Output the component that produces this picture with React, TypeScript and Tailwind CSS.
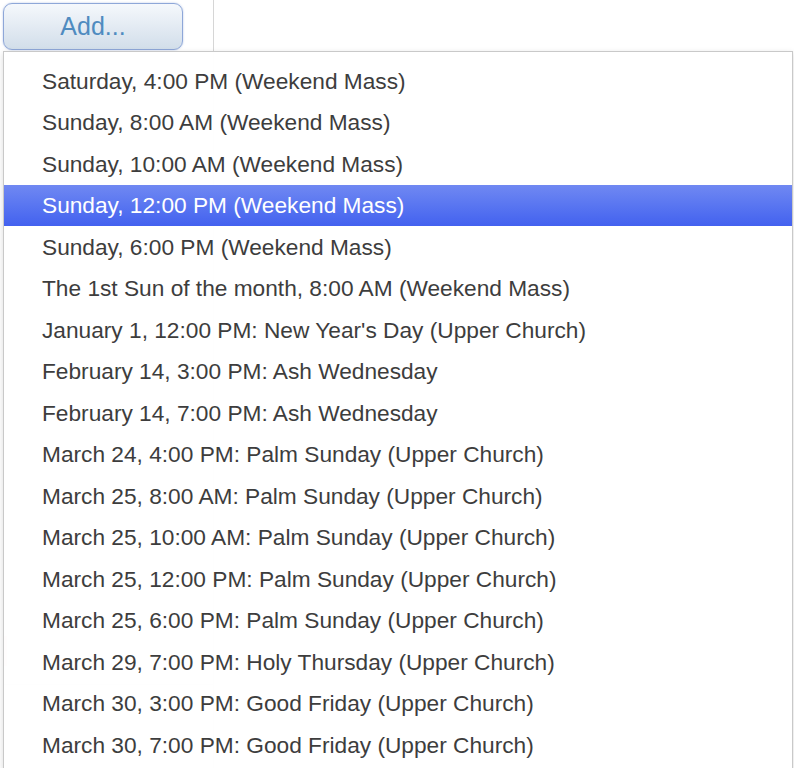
import React from 'react';

const services: string[] = [
  'Saturday, 4:00 PM (Weekend Mass)',
  'Sunday, 8:00 AM (Weekend Mass)',
  'Sunday, 10:00 AM (Weekend Mass)',
  'Sunday, 12:00 PM (Weekend Mass)',
  'Sunday, 6:00 PM (Weekend Mass)',
  'The 1st Sun of the month, 8:00 AM (Weekend Mass)',
  "January 1, 12:00 PM: New Year's Day (Upper Church)",
  'February 14, 3:00 PM: Ash Wednesday',
  'February 14, 7:00 PM: Ash Wednesday',
  'March 24, 4:00 PM: Palm Sunday (Upper Church)',
  'March 25, 8:00 AM: Palm Sunday (Upper Church)',
  'March 25, 10:00 AM: Palm Sunday (Upper Church)',
  'March 25, 12:00 PM: Palm Sunday (Upper Church)',
  'March 25, 6:00 PM: Palm Sunday (Upper Church)',
  'March 29, 7:00 PM: Holy Thursday (Upper Church)',
  'March 30, 3:00 PM: Good Friday (Upper Church)',
  'March 30, 7:00 PM: Good Friday (Upper Church)',
];

const App: React.FC = () => {
  const selected = 3;

  return (
    <div className="relative w-[794px] h-[768px] overflow-hidden bg-white" style={{ fontFamily: '"Liberation Sans", Arial, sans-serif' }}>
      {/* sidebar column behind the menu */}
      <div className="w-[214px] h-full border-r border-[#d6d6d6] flex flex-col pt-[3px] pl-[3px]">
        <button className="w-[180px] h-[47px] rounded-[9px] border border-[#8ea7d8] bg-gradient-to-b from-[#f5f8fc] to-[#d2deea] text-[25px] text-[#4f8bc0] shadow-[0_0_2px_rgba(120,150,210,0.6)]">
          Add...
        </button>
        <div className="mt-[6px] w-[180px] h-[48px] rounded-[8px] border border-[#e6ebf2]" />
        <div className="mt-[262px] w-[180px] h-[46px] rounded-[8px] border border-[#e6ebf2] bg-[#f7f9fc]" />
        <div className="mt-[224px] w-[4px] h-[30px] bg-[#eec0c0]" />
        <div className="mt-[18px] w-[210px] h-[80px] border-t border-[#e2e2e2] bg-[#f1f5fa]" />
      </div>

      {/* dropdown list */}
      <div className="absolute left-[3px] top-[51px] right-[1px] bottom-[-2px] border border-[#c9c9c9] bg-white/[0.97] shadow-[0_2px_6px_rgba(0,0,0,0.15)] pt-[8px]">
        <ul>
          {services.map((s, i) => (
            <li
              key={s}
              className={
                i === selected
                  ? 'h-[41.5px] pl-[38px] flex items-center text-[22.7px] text-white bg-gradient-to-b from-[#7088f2] to-[#4361ef]'
                  : 'h-[41.5px] pl-[38px] flex items-center text-[22.7px] text-[#3d3d3d]'
              }
            >
              {s}
            </li>
          ))}
        </ul>
      </div>
    </div>
  );
};

export default App;
